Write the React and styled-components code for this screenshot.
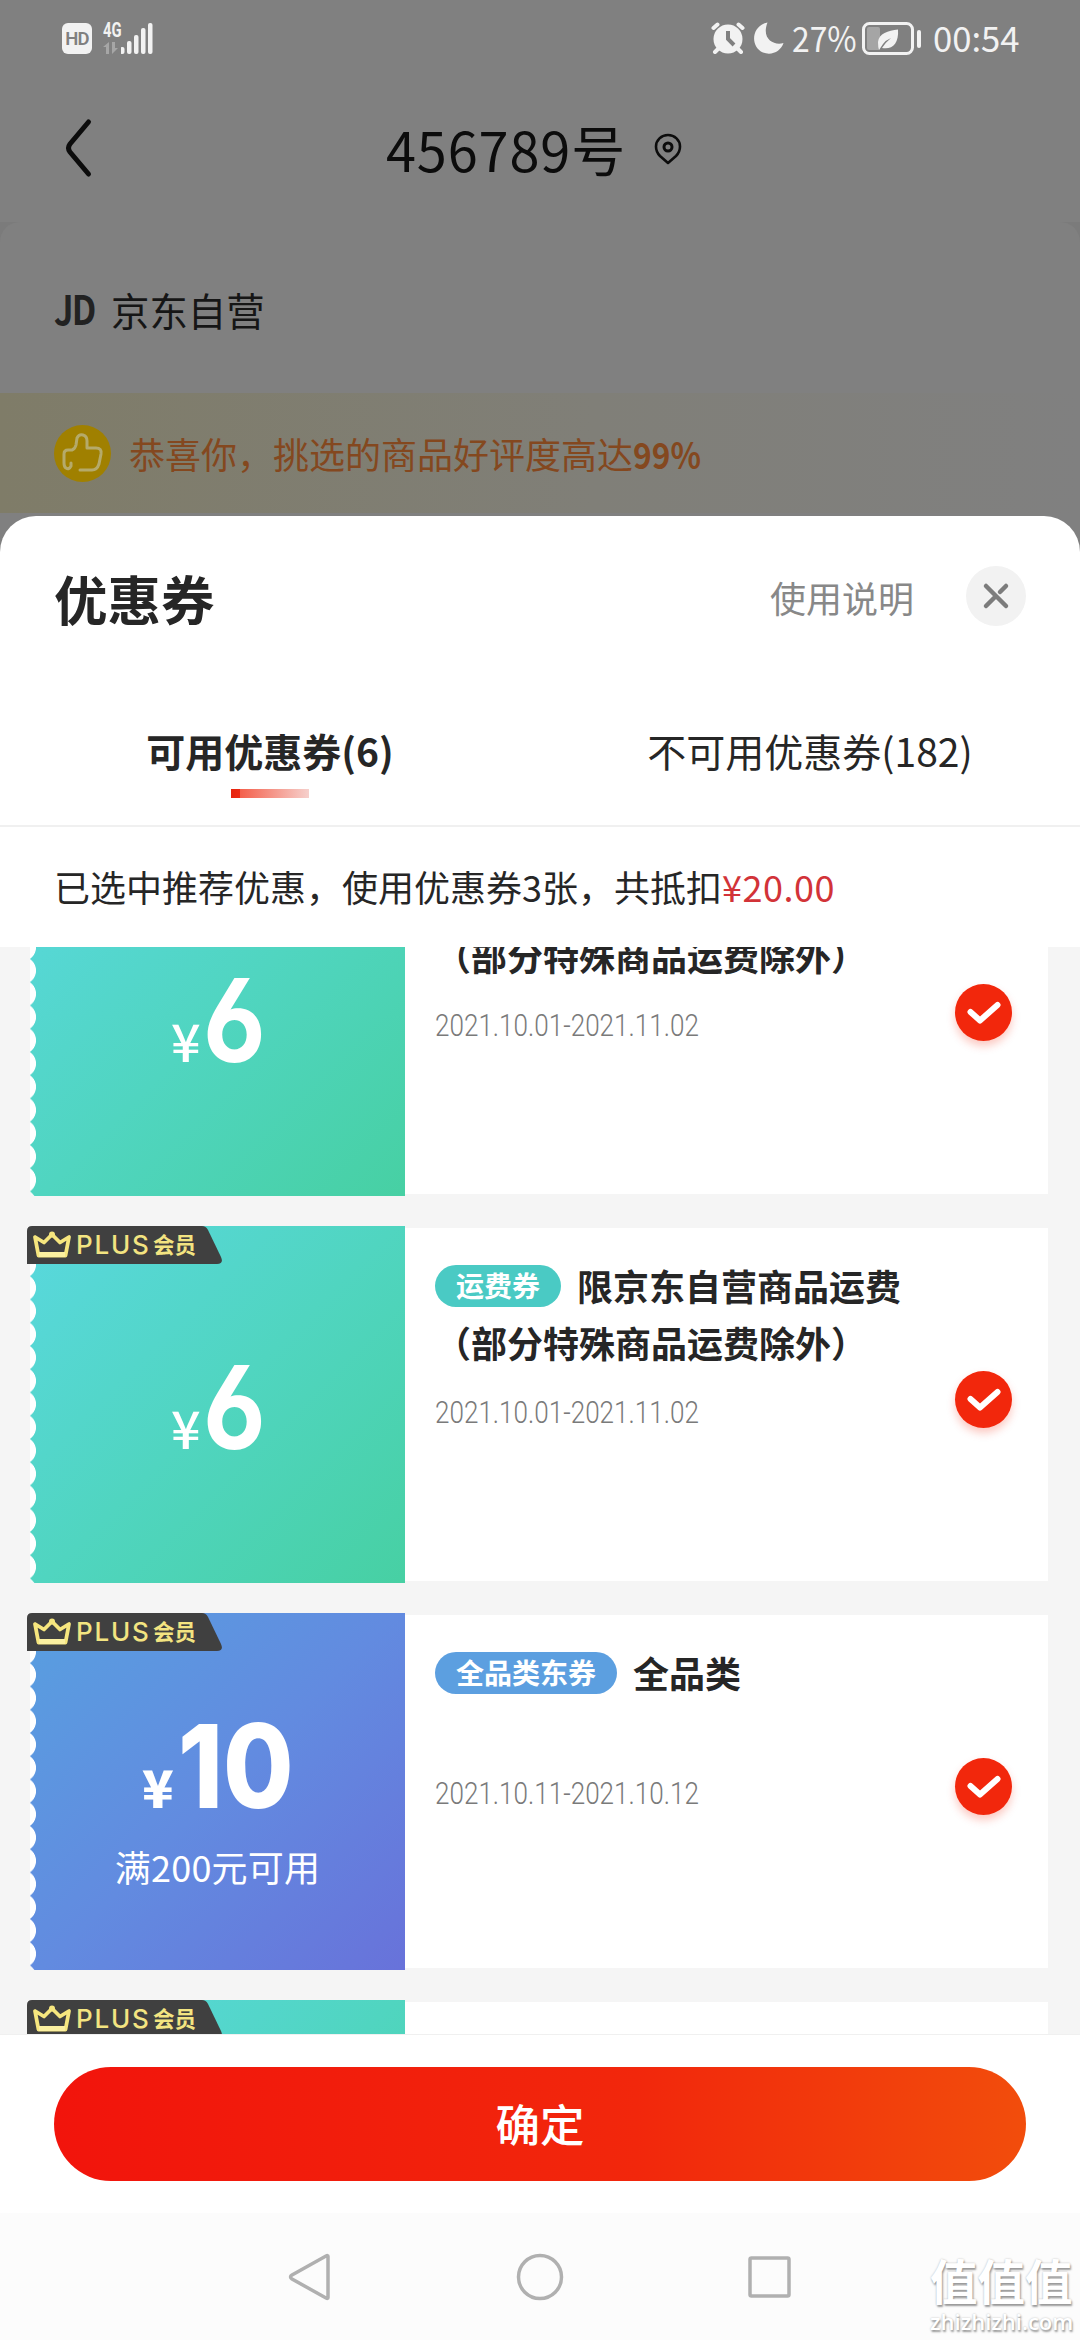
import React from "react";
import styled, { createGlobalStyle } from "styled-components";

const GlobalStyle = createGlobalStyle`
  * {
    box-sizing: border-box;
  }
  body {
    margin: 0;
    background: #808080;
    font-family: "Noto Sans CJK SC", "Noto Sans", sans-serif;
    color: #262626;
  }
`;

const Screen = styled.div`
  width: 1080px;
  height: 2340px;
  display: flex;
  flex-direction: column;
  overflow: hidden;
  background: #808080;
`;

const StatusBar = styled.div`
  height: 76px;
  flex: none;
  display: flex;
  justify-content: space-between;
  padding: 0 62px;
  color: #f2f2f2;
`;

const StatusGroup = styled.div`
  display: flex;
  align-items: center;
`;

const HdBox = styled.span`
  width: 30px;
  height: 31px;
  border-radius: 6px;
  background: #f2f2f2;
  color: #808080;
  font: 600 18.5px/32px "Roboto", sans-serif;
  letter-spacing: -0.8px;
  text-align: center;
`;

const Network = styled.span`
  display: flex;
  flex-direction: column;
  width: 18px;
  height: 31px;
  margin-left: 11px;
  span {
    font: 700 20px/15px "Roboto", sans-serif;
    transform: scaleX(0.74);
    transform-origin: left;
  }
  svg {
    margin-top: 4px;
  }
`;

const StatusText = styled.span`
  font-family: "Noto Sans CJK SC", sans-serif;
  font-size: 35px;
  line-height: 73px;
  padding-bottom: 3px;
  margin-left: ${(props) => props.$left}px;
  width: ${(props) => props.$width}px;
  white-space: nowrap;
  span {
    display: inline-block;
    transform: scaleX(${(props) => props.$scale});
    transform-origin: left;
  }
`;

const TitleBar = styled.header`
  height: 146px;
  flex: none;
  display: flex;
  padding: 0 62px;
  color: #0c0c0c;
`;

const BackIcon = styled.svg`
  margin-top: 41px;
  width: 32px;
  height: 62px;
`;

const PageTitle = styled.h1`
  margin: 0 0 0 292px;
  font-size: 54px;
  font-weight: 400;
  line-height: 146px;
  letter-spacing: 0.9px;
`;

const PinIcon = styled.svg`
  margin: 57px 0 0 28px;
  width: 28px;
  height: 32px;
`;

const ShopRow = styled.div`
  height: 171px;
  flex: none;
  display: flex;
  align-items: center;
  padding: 2px 54px 0;
  background: #808080;
  border-radius: 20px 20px 0 0;
  font-size: 38.4px;
  color: #161616;
`;

const Backdrop = styled.div`
  flex: none;
  background: #7b7b7b;
`;

const JdMark = styled.span`
  width: 57px;
  padding-bottom: 2px;
  font: 700 40px/44px "Noto Sans CJK SC", sans-serif;
  letter-spacing: -2px;
  transform: scaleX(0.86);
  transform-origin: left;
  color: #222;
`;

const PraiseBar = styled.div`
  height: 120px;
  flex: none;
  display: flex;
  align-items: center;
  padding: 0 54px;
  background: linear-gradient(90deg, #7f7c68 0%, #807f78 55%, #808080 100%);
  font-size: 36px;
  color: #84481f;
  svg {
    margin-right: 18px;
  }
  b {
    transform: scaleX(0.88);
    transform-origin: left;
  }
`;

const Sheet = styled.section`
  margin-top: 3px;
  flex: 1;
  display: flex;
  flex-direction: column;
  background: #fff;
  border-radius: 36px 36px 0 0;
`;

const SheetHeader = styled.div`
  height: 160px;
  flex: none;
  display: flex;
  align-items: center;
  padding: 0 54px;
`;

const SheetTitle = styled.h2`
  flex: 1;
  margin: 3px 0 0;
  font-size: 53.5px;
  font-weight: 700;
`;

const HelpLink = styled.span`
  margin: 1px 52px 0 0;
  font-size: 36px;
  color: #888;
`;

const CloseButton = styled.button`
  width: 60px;
  height: 60px;
  padding: 0;
  border: none;
  border-radius: 50%;
  background: #f2f2f2;
  display: flex;
  align-items: center;
  justify-content: center;
`;

const Tabs = styled.div`
  height: 151px;
  flex: none;
  display: flex;
  border-bottom: 2px solid #f0f0f0;
`;

const Tab = styled.div`
  flex: 1;
  display: flex;
  flex-direction: column;
  align-items: center;
  padding-top: 44px;
  font-size: 39px;
  line-height: 60px;
  font-weight: ${(props) => (props.$active ? 700 : 400)};
  white-space: nowrap;
`;

const Indicator = styled.i`
  width: 78px;
  height: 9px;
  margin-top: 9px;
  background: linear-gradient(
    90deg,
    #e6240d 0,
    #ec2a14 9px,
    #f4604c 9px,
    #f6d0cc 100%
  );
`;

const Summary = styled.p`
  height: 120px;
  flex: none;
  margin: 0;
  padding: 0 54px;
  font-size: 36px;
  line-height: 119px;
  em {
    font-style: normal;
    letter-spacing: 0.5px;
    color: #d23338;
  }
`;

// the list is scrolled, so the first card starts above the visible area
const CouponList = styled.div`
  height: 1087px;
  flex: none;
  overflow: hidden;
  background: #f5f5f5;
  padding: 0 32px 0 30px;
`;

const CouponScroll = styled.div`
  display: flex;
  flex-direction: column;
  gap: 30px;
  margin-top: -108px;
`;

const Card = styled.article`
  position: relative;
  height: 357px;
  flex: none;
  display: flex;
  align-items: center;
`;

const tones = {
  teal: { from: "#59d8de", mid: "#50d5c0", to: "#47d0a3", tag: "#4acac4" },
  blue: { from: "#589fe0", mid: "#628be0", to: "#6872da", tag: "#5c9fe0" },
};

const Amount = styled.div`
  width: 375px;
  height: 357px;
  display: flex;
  flex-direction: column;
  align-items: center;
  padding-top: ${(props) => (props.$hasLimit ? 93 : 121)}px;
  border-bottom-left-radius: 5px;
  color: #fff;
  background: radial-gradient(
        circle at -8px 50%,
        #fff 13.6px,
        transparent 14.4px
      )
      0 3.7px / 8px 23.25px repeat-y,
    linear-gradient(
      135deg,
      ${(props) => tones[props.$tone].from},
      ${(props) => tones[props.$tone].mid} 50%,
      ${(props) => tones[props.$tone].to}
    );
`;

const Price = styled.div`
  height: 120px;
  display: flex;
  align-items: baseline;
  line-height: 120px;
  font-family: "Inter", sans-serif;
  font-feature-settings: "cv03", "cv04";
  font-weight: ${(props) => (props.$heavy ? 800 : 700)};
  small {
    font-size: 52px;
    font-family: "Noto Sans CJK SC", sans-serif;
    font-weight: ${(props) => (props.$heavy ? 900 : 500)};
    margin-right: ${(props) => (props.$heavy ? 4 : 2)}px;
  }
  b {
    font-size: 116px;
    font-weight: inherit;
    transform: scaleX(0.88);
    transform-origin: left;
    margin-right: ${(props) => (props.$heavy ? -16 : -10)}px;
  }
`;

const Limit = styled.span`
  margin-top: 13px;
  font-size: 36px;
  line-height: 54px;
  letter-spacing: 0.2px;
`;

const PlusBadge = styled.div`
  position: absolute;
  left: -3px;
  top: 0;
  width: 195px;
  height: 38px;
  display: flex;
  align-items: center;
  color: #f3e481;
  font: 500 26px/38px "Inter", sans-serif;
  letter-spacing: 1.8px;
  svg.shape {
    position: absolute;
    inset: 0;
  }
  svg.crown {
    position: relative;
    margin-left: 5px;
  }
  span {
    position: relative;
    margin-left: 4px;
    width: 77px;
  }
  strong {
    position: relative;
    font: 700 21.5px/36px "Noto Sans CJK SC", sans-serif;
    letter-spacing: 0;
    padding-bottom: 2px;
  }
`;

const Detail = styled.div`
  flex: 1;
  height: 353px;
  display: flex;
  background: #fff;
  padding: 29px 36px 0 30px;
`;

const DetailText = styled.div`
  flex: 1;
  display: flex;
  flex-direction: column;
`;

const TitleLine = styled.div`
  height: 57px;
  display: flex;
  align-items: center;
  font-size: 36px;
  font-weight: 700;
  line-height: 57px;
  white-space: nowrap;
`;

const CouponTag = styled.span`
  height: 42px;
  margin-right: 16px;
  padding: 0 21px;
  border-radius: 21px;
  background: ${(props) => tones[props.$tone].tag};
  color: #fff;
  font-size: 28px;
  line-height: 40px;
`;

const Period = styled.div`
  margin-top: ${(props) => (props.$far ? 69 : 18)}px;
  font: 300 32px/46px "Roboto", sans-serif;
  color: #7a7a7a;
  white-space: nowrap;
  transform: scaleX(0.815);
  transform-origin: left;
`;

const Checked = styled.span`
  width: 57px;
  height: 57px;
  margin-top: 114px;
  border-radius: 50%;
  background: #f2270c;
  box-shadow: 0 5px 9px rgba(242, 39, 12, 0.25);
  display: flex;
  align-items: center;
  justify-content: center;
`;

const Footer = styled.div`
  height: 179px;
  flex: none;
  padding: 32px 54px 0;
  border-top: 1px solid #f0f0f0;
`;

const ConfirmButton = styled.button`
  width: 100%;
  height: 114px;
  border: none;
  border-radius: 57px;
  background: linear-gradient(
    90deg,
    #f2140c 0%,
    #f2270c 60%,
    #f24d0c 100%
  );
  color: #fff;
  font: 500 44.5px/112px "Noto Sans CJK SC", sans-serif;
  padding: 0 0 2px;
`;

const NavBar = styled.nav`
  position: relative;
  height: 127px;
  flex: none;
  display: flex;
  justify-content: center;
  gap: 181px;
  padding-top: 39px;
  background: #fcfcfc;
`;

const Watermark = styled.div`
  position: absolute;
  right: 6px;
  top: 38px;
  width: 144px;
  color: #fff;
  text-shadow: 1px 2px 2px #999, 0 0 2px #bbb;
  font: 700 47.5px/58px "Noto Sans CJK SC", sans-serif;
  white-space: nowrap;
  span {
    display: block;
    font: 600 22px/24px "Open Sans", sans-serif;
  }
`;

const shippingTitle = ["限京东自营商品运费", "（部分特殊商品运费除外）"];

const coupons = [
  {
    id: 1,
    tone: "teal",
    price: "6",
    tag: "运费券",
    title: shippingTitle,
    period: "2021.10.01-2021.11.02",
  },
  {
    id: 2,
    tone: "teal",
    price: "6",
    tag: "运费券",
    title: shippingTitle,
    period: "2021.10.01-2021.11.02",
  },
  {
    id: 3,
    tone: "blue",
    price: "10",
    limit: "满200元可用",
    tag: "全品类东券",
    title: ["全品类"],
    period: "2021.10.11-2021.10.12",
  },
  {
    id: 4,
    tone: "teal",
    price: "6",
    tag: "运费券",
    title: shippingTitle,
    period: "2021.10.01-2021.11.02",
  },
];

const Badge = () => (
  <PlusBadge>
    <svg className="shape" width="195" height="38" viewBox="0 0 195 38">
      <path
        d="M0 5Q0 0 5 0H175Q179 0 181 4L194 31Q197 38 190 38H0Z"
        fill="#404040"
      />
    </svg>
    <svg className="crown" width="40" height="28" viewBox="0 0 40 28" fill="none">
      <path
        d="M3 6L12 11.5L20 3.5L28 11.5L37 6L33.5 24.5H6.5Z"
        stroke="#f6e67e"
        strokeWidth="3.8"
        strokeLinejoin="round"
      />
      <circle cx="20" cy="3.5" r="3" fill="#f6e67e" />
      <path d="M7 23.5H33" stroke="#fbf0a0" strokeWidth="5" />
    </svg>
    <span>PLUS</span>
    <strong>会员</strong>
  </PlusBadge>
);

const Coupon = ({ coupon }) => {
  const hasLimit = Boolean(coupon.limit);
  const [firstLine, secondLine] = coupon.title;

  return (
    <Card>
      <Amount $tone={coupon.tone} $hasLimit={hasLimit}>
        <Price $heavy={hasLimit}>
          <small>¥</small>
          <b>{coupon.price}</b>
        </Price>
        {hasLimit && <Limit>{coupon.limit}</Limit>}
      </Amount>
      <Detail>
        <DetailText>
          <TitleLine>
            <CouponTag $tone={coupon.tone}>{coupon.tag}</CouponTag>
            {firstLine}
          </TitleLine>
          {secondLine && <TitleLine>{secondLine}</TitleLine>}
          <Period $far={hasLimit}>{coupon.period}</Period>
        </DetailText>
        <Checked>
          <svg width="34" height="26" viewBox="0 0 34 26" fill="none">
            <path
              d="M3.500 12L13 20.500L30.500 5"
              stroke="#fff"
              strokeWidth="6"
              strokeLinecap="round"
              strokeLinejoin="round"
            />
          </svg>
        </Checked>
      </Detail>
      <Badge />
    </Card>
  );
};

const MoonIcon = styled.svg`
  margin-left: 9px;
`;

const BatteryIcon = styled.svg`
  margin-left: 6px;
`;

const PhoneStatus = () => (
  <StatusBar>
    <StatusGroup>
      <HdBox>HD</HdBox>
      <Network>
        <span>4G</span>
        <svg width="15" height="12" viewBox="0 0 15 12" fill="#a6a6a6">
          <path d="M0 5L6 0V12H3V5Z" />
          <path d="M9 0H12V6H15L9 12Z" />
        </svg>
      </Network>
      <svg width="32" height="31" viewBox="0 0 32 31" fill="#f2f2f2">
        <rect x="-1" y="24" width="4.500" height="7" rx="2" />
        <rect x="6" y="18" width="4.500" height="13" rx="2" />
        <rect x="13" y="12" width="4.500" height="19" rx="2" />
        <rect x="20" y="5" width="4.500" height="26" rx="2" />
        <rect x="27" y="0" width="4.500" height="31" rx="2" />
      </svg>
    </StatusGroup>
    <StatusGroup>
      <svg width="34" height="32" viewBox="0 0 34 32">
        <circle cx="17" cy="17" r="14.500" fill="#f2f2f2" />
        <path
          d="M2.500 6L6.500 2.500M31.500 6L27.500 2.500M4 30L8 26M30 30L26 26"
          stroke="#f2f2f2"
          strokeWidth="4"
          strokeLinecap="round"
        />
        <path d="M17 9V17L23 23" stroke="#808080" strokeWidth="4" fill="none" />
      </svg>
      <MoonIcon width="30" height="32" viewBox="0 0 30 32">
        <path
          d="M13.500 .5C-3 4-4 25 9 30.500C18 34 27 29 29.500 21C20 24 7 17 13.500 .5Z"
          fill="#f2f2f2"
        />
      </MoonIcon>
      <StatusText $left={8} $width={64} $scale={0.91}>
        <span>27%</span>
      </StatusText>
      <BatteryIcon width="60" height="33" viewBox="0 0 60 33">
        <rect
          x="1.500"
          y="1.500"
          width="49"
          height="30"
          rx="6"
          fill="none"
          stroke="#f2f2f2"
          strokeWidth="3"
        />
        <rect x="5" y="5" width="13" height="23" rx="2" fill="#a5a5a5" />
        <path
          d="M36 7.500C26 9 17 11 16 20Q16 25 17 28L21 22Q24 18 29 16Q24 20 20 26C30 28 37 22 36 7.500Z"
          fill="#f2f2f2"
        />
        <rect x="55" y="8" width="4" height="18" rx="2" fill="#f2f2f2" />
      </BatteryIcon>
      <StatusText $left={11} $width={85} $scale={0.99}>
        <span>00:54</span>
      </StatusText>
    </StatusGroup>
  </StatusBar>
);

export default function App() {
  return (
    <Screen>
      <GlobalStyle />
      <PhoneStatus />
      <TitleBar>
        <BackIcon viewBox="0 0 32 62" fill="none">
          <path
            d="M26.500 5L8 27Q5 31 8 35L26.500 57"
            stroke="#0c0c0c"
            strokeWidth="5"
            strokeLinecap="round"
          />
        </BackIcon>
        <PageTitle>456789号</PageTitle>
        <PinIcon viewBox="0 0 28 32" fill="none" stroke="#0c0c0c">
          <path
            d="M14 30L6 23Q2 19 2 13.500A12 11.500 0 0 1 26 13.500Q26 19 22 23Z"
            strokeWidth="2.600"
            strokeLinejoin="round"
          />
          <circle cx="14" cy="14" r="4" strokeWidth="3" />
        </PinIcon>
      </TitleBar>
      <Backdrop>
        <ShopRow>
          <JdMark>JD</JdMark>
          京东自营
        </ShopRow>
      </Backdrop>
      <PraiseBar>
        <svg width="57" height="57" viewBox="0 0 57 57" fill="none">
          <circle cx="28.500" cy="28.500" r="28.500" fill="#a08000" />
          <path
            d="M17 38V41Q15 45 12 43Q10 42 10 38V29Q10 25 14 25H18Q21 24 22 20L23 13Q25 9 29 10Q33 11 33 16V23H42Q48 23 47 29L45 39Q43 45 38 45H26"
            stroke="#b5aa6a"
            strokeWidth="3"
            strokeLinecap="round"
            strokeLinejoin="round"
          />
        </svg>
        恭喜你，挑选的商品好评度高达<b>99%</b>
      </PraiseBar>
      <Sheet>
        <SheetHeader>
          <SheetTitle>优惠券</SheetTitle>
          <HelpLink>使用说明</HelpLink>
          <CloseButton>
            <svg width="28" height="28" viewBox="0 0 28 28">
              <path
                d="M4 4L24 24M24 4L18 10M13 15L4 24"
                stroke="#7c7c7c"
                strokeWidth="4.500"
                strokeLinecap="round"
              />
            </svg>
          </CloseButton>
        </SheetHeader>
        <Tabs>
          <Tab $active>
            可用优惠券(6)
            <Indicator />
          </Tab>
          <Tab>不可用优惠券(182)</Tab>
        </Tabs>
        <Summary>
          已选中推荐优惠，使用优惠券3张，共抵扣<em>¥20.00</em>
        </Summary>
        <CouponList>
          <CouponScroll>
            {coupons.map((coupon) => (
              <Coupon key={coupon.id} coupon={coupon} />
            ))}
          </CouponScroll>
        </CouponList>
        <Footer>
          <ConfirmButton>确定</ConfirmButton>
        </Footer>
        <NavBar>
          <svg width="48" height="50" viewBox="0 0 48 50" fill="none">
            <path
              d="M41 4.500V45.500Q41 47 39 46L5 27Q2 25 5 23L39 4Q41 3 41 4.500Z"
              stroke="#b0b0b0"
              strokeWidth="3.500"
            />
          </svg>
          <svg width="48" height="50" viewBox="0 0 48 50" fill="none">
            <circle cx="24" cy="25" r="21.500" stroke="#b0b0b0" strokeWidth="3.500" />
          </svg>
          <svg width="48" height="50" viewBox="0 0 48 50" fill="none">
            <rect
              x="5"
              y="6"
              width="39"
              height="38"
              rx="1.500"
              stroke="#b0b0b0"
              strokeWidth="3.500"
            />
          </svg>
          <Watermark>
            值值值
            <span>zhizhizhi.com</span>
          </Watermark>
        </NavBar>
      </Sheet>
    </Screen>
  );
}
